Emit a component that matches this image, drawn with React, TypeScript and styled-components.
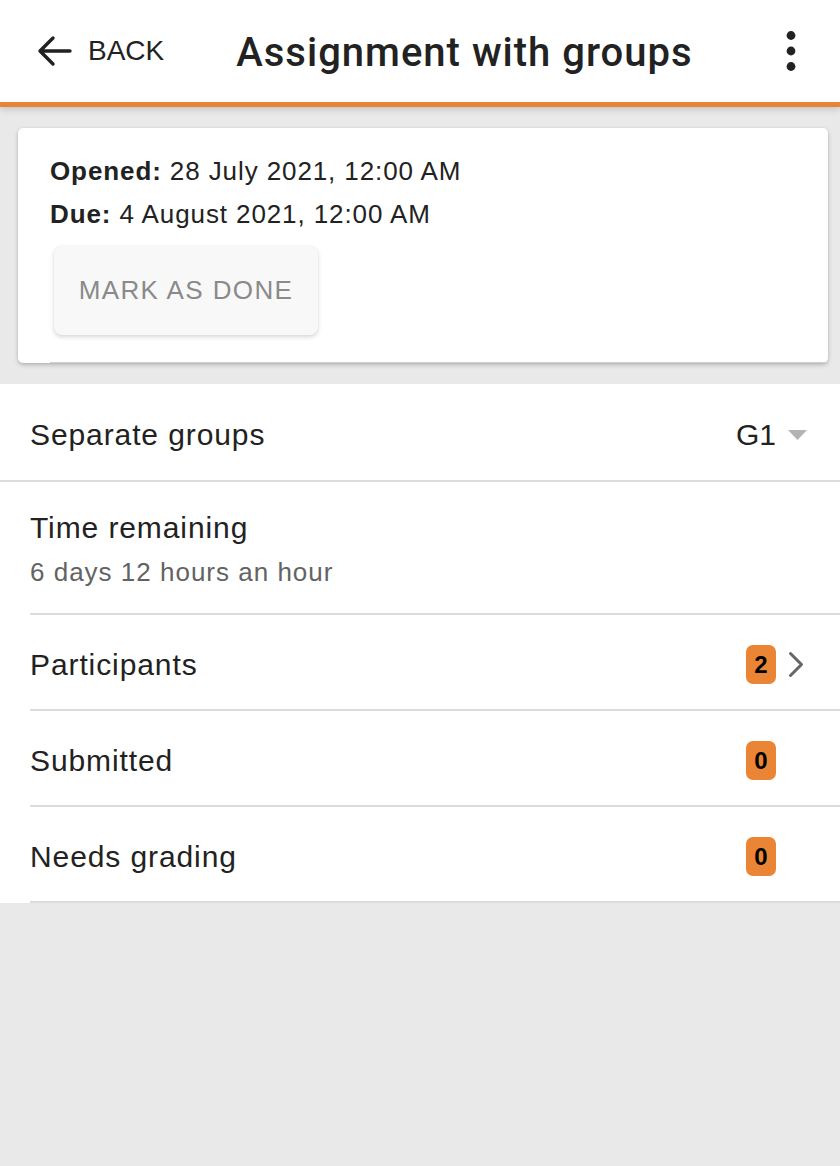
import React from 'react';
import styled, { createGlobalStyle } from 'styled-components';

const GlobalStyle = createGlobalStyle`
  html, body {
    margin: 0;
    padding: 0;
    background: #e9e9e9;
    font-family: "Liberation Sans", Arial, Helvetica, sans-serif;
    color: #222;
  }
  #root {
    min-height: 100vh;
  }
`;

type Stat = { label: string; count: number; link?: boolean };

const stats: Stat[] = [
  { label: 'Participants', count: 2, link: true },
  { label: 'Submitted', count: 0 },
  { label: 'Needs grading', count: 0 },
];

const ArrowBack = () => (
  <svg width="36" height="32" viewBox="0 0 36 32" fill="none">
    <path
      d="M34 16H4M17 3L4 16L17 29"
      stroke="#222"
      strokeWidth="3.4"
      strokeLinecap="round"
      strokeLinejoin="round"
    />
  </svg>
);

const Kebab = () => (
  <svg width="10" height="42" viewBox="0 0 10 42">
    <circle cx="5" cy="5.5" r="4.4" fill="#222" />
    <circle cx="5" cy="21" r="4.4" fill="#222" />
    <circle cx="5" cy="36.5" r="4.4" fill="#222" />
  </svg>
);

const Caret = () => (
  <svg width="19" height="10" viewBox="0 0 19 10">
    <path d="M0 0H19L9.5 10Z" fill="#b3b3b3" />
  </svg>
);

const Chevron = () => (
  <svg width="16" height="27" viewBox="0 0 16 27" fill="none">
    <path
      d="M2.5 2.5L13.5 13.5L2.5 24.5"
      stroke="#666"
      strokeWidth="3"
      strokeLinecap="round"
      strokeLinejoin="round"
    />
  </svg>
);

const App: React.FC = () => {
  return (
    <Page>
      <GlobalStyle />
      <Header>
        <BackButton>
          <ArrowBack />
          <span>BACK</span>
        </BackButton>
        <Title>Assignment with groups</Title>
        <MenuButton>
          <Kebab />
        </MenuButton>
      </Header>

      <Card>
        <CardItem>
          <DateLine>
            <strong>Opened:</strong> 28 July 2021, 12:00 AM
          </DateLine>
          <DateLine>
            <strong>Due:</strong> 4 August 2021, 12:00 AM
          </DateLine>
          <DoneButton>MARK AS DONE</DoneButton>
        </CardItem>
      </Card>

      <List>
        <GroupRow>
          <Label>Separate groups</Label>
          <Trailing>
            <GroupValue>G1</GroupValue>
            <IconSlot>
              <Caret />
            </IconSlot>
          </Trailing>
        </GroupRow>

        <Row>
          <RowInner $tall>
            <div>
              <Label>Time remaining</Label>
              <SubText>6 days 12 hours an hour</SubText>
            </div>
          </RowInner>
        </Row>

        {stats.map((s) => (
          <Row key={s.label}>
            <RowInner>
              <Label>{s.label}</Label>
              <Trailing>
                <Badge>{s.count}</Badge>
                <IconSlot>{s.link && <Chevron />}</IconSlot>
              </Trailing>
            </RowInner>
          </Row>
        ))}
      </List>
    </Page>
  );
};

export default App;

const Page = styled.div`
  min-height: 100vh;
  background: #e9e9e9;
  display: flex;
  flex-direction: column;
`;

const Header = styled.header`
  height: 102px;
  background: #fff;
  border-bottom: 5px solid #e8843a;
  box-shadow: 0 2px 7px rgba(0, 0, 0, 0.18);
  display: flex;
  align-items: center;
  padding-left: 36px;
  position: relative;
  z-index: 2;
`;

const BackButton = styled.button`
  display: flex;
  align-items: center;
  gap: 16px;
  background: none;
  border: none;
  padding: 0;
  font-family: inherit;
  font-size: 28px;
  color: #222;
  cursor: pointer;
`;

const Title = styled.h1`
  margin: 0 0 0 72px;
  flex: 1;
  font-family: Roboto, "Liberation Sans", Arial, sans-serif;
  font-size: 40px;
  font-weight: 500;
  letter-spacing: 1px;
  color: #222;
  line-height: 1;
  padding-top: 3px;
`;

const MenuButton = styled.button`
  background: none;
  border: none;
  padding: 0;
  margin-right: 44px;
  display: flex;
  align-items: center;
  cursor: pointer;
`;

const Card = styled.section`
  margin: 21px 12px 21px 18px;
  background: #fff;
  border-radius: 5px;
  box-shadow: 0 2px 4px rgba(0, 0, 0, 0.22), 0 0 2px rgba(0, 0, 0, 0.08);
`;

const CardItem = styled.div`
  margin-left: 32px;
  padding: 22px 0 27px 0;
  border-bottom: 1px solid #cfcfcf;
  display: flex;
  flex-direction: column;
  align-items: flex-start;
`;

const DateLine = styled.div`
  font-size: 26px;
  line-height: 43px;
  letter-spacing: 0.9px;
  color: #222;

  strong {
    font-weight: 700;
  }
`;

const DoneButton = styled.button`
  margin: 10px 0 0 4px;
  width: 264px;
  height: 89px;
  border: none;
  border-radius: 8px;
  background: #f8f8f8;
  box-shadow: 0 2px 4px rgba(0, 0, 0, 0.16), 0 0 1px rgba(0, 0, 0, 0.08);
  font-family: inherit;
  font-size: 26px;
  letter-spacing: 1.4px;
  color: #8a8a8a;
  cursor: pointer;
`;

const List = styled.div`
  background: #fff;
`;

const GroupRow = styled.div`
  box-sizing: border-box;
  height: 98px;
  border-bottom: 2px solid #dcdcdc;
  padding: 6px 33px 0 30px;
  display: flex;
  align-items: center;
  justify-content: space-between;
`;

const Row = styled.div`
  padding-left: 30px;
`;

const RowInner = styled.div<{ $tall?: boolean }>`
  box-sizing: border-box;
  height: ${(p) => (p.$tall ? '133px' : '96px')};
  border-bottom: 2px solid #dcdcdc;
  padding: ${(p) => (p.$tall ? '2px' : '5px')} 33px 0 0;
  display: flex;
  align-items: center;
  justify-content: space-between;
`;

const Label = styled.div`
  font-size: 30px;
  line-height: 36px;
  letter-spacing: 0.9px;
  color: #222;
`;

const SubText = styled.div`
  margin-top: 10px;
  font-size: 26px;
  line-height: 32px;
  letter-spacing: 1px;
  color: #636363;
`;

const Trailing = styled.div`
  display: flex;
  align-items: center;
  gap: 12px;
`;

const GroupValue = styled.span`
  font-size: 30px;
  color: #222;
`;

const IconSlot = styled.span`
  width: 19px;
  display: flex;
  align-items: center;
`;

const Badge = styled.span`
  min-width: 30px;
  height: 39px;
  box-sizing: border-box;
  padding: 0 8px;
  border-radius: 7px;
  background: #ea8535;
  color: #000;
  font-size: 24px;
  font-weight: 700;
  display: flex;
  align-items: center;
  justify-content: center;
`;
